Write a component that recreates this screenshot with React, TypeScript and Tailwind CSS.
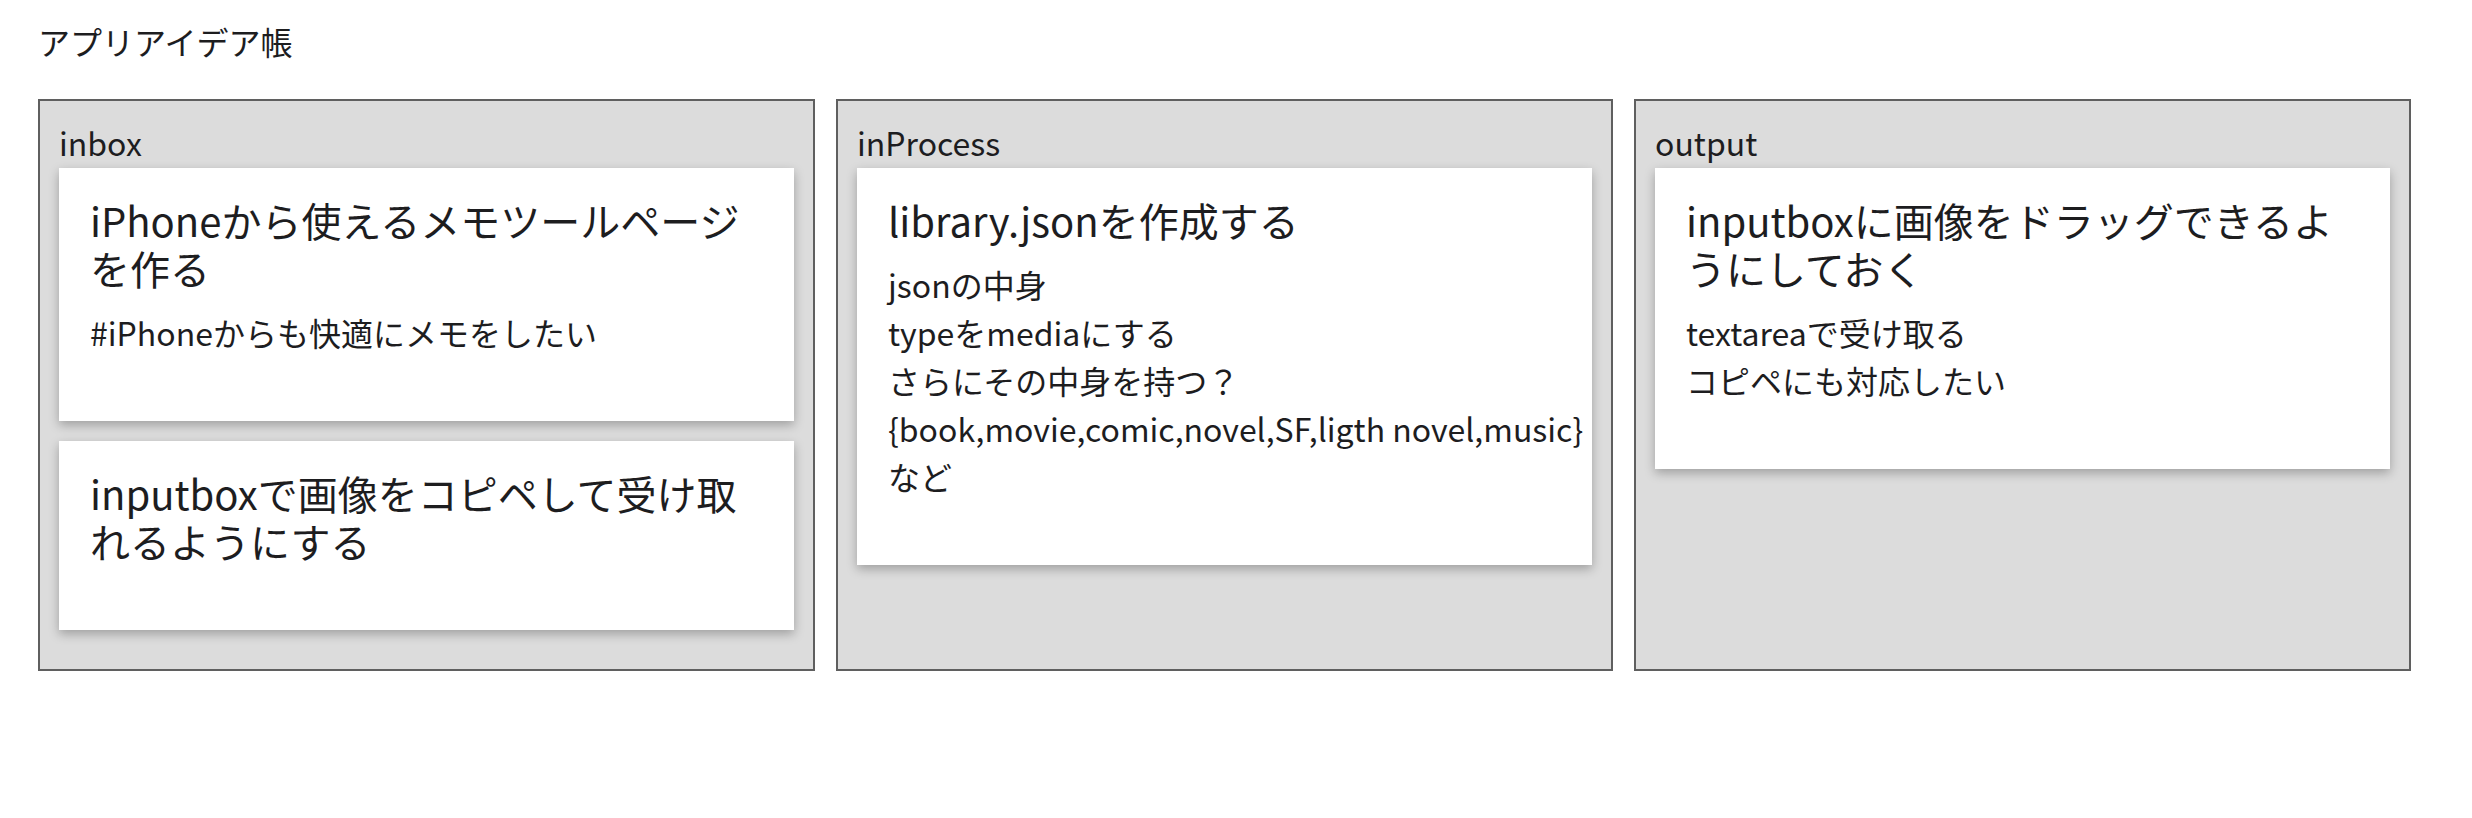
import React from 'react';

interface Card {
  title: string;
  body: string[];
}

interface Column {
  name: string;
  cards: Card[];
}

const columns: Column[] = [
  {
    name: 'inbox',
    cards: [
      { title: 'iPhoneから使えるメモツールページを作る', body: ['#iPhoneからも快適にメモをしたい'] },
      { title: 'inputboxで画像をコピペして受け取れるようにする', body: [] },
    ],
  },
  {
    name: 'inProcess',
    cards: [
      {
        title: 'library.jsonを作成する',
        body: ['jsonの中身', 'typeをmediaにする', 'さらにその中身を持つ？', '{book,movie,comic,novel,SF,ligth novel,music}', 'など'],
      },
    ],
  },
  {
    name: 'output',
    cards: [
      { title: 'inputboxに画像をドラッグできるようにしておく', body: ['textareaで受け取る', 'コピペにも対応したい'] },
    ],
  },
];

const IdeaCard: React.FC<{ card: Card }> = ({ card }) => (
  <div className="mb-[20px] bg-white px-[31px] pt-[28px] pb-[65px] shadow-[0_4px_10px_rgba(0,0,0,0.28)]">
    <h2 className="text-[40px] leading-[48px] font-normal text-[#1d1d1f]">{card.title}</h2>
    {card.body.length > 0 && (
      <div className="mt-[16px] text-[32px] leading-[48px] text-[#1d1d1f]">
        {card.body.map((line, i) => (
          <div key={i} className="whitespace-nowrap">{line}</div>
        ))}
      </div>
    )}
  </div>
);

export default function App() {
  return (
    <div
      className="min-h-screen bg-white pt-[17px] pl-[38px] text-[#1d1d1f]"
      style={{ fontFamily: '"Noto Sans CJK JP", "Noto Sans", sans-serif' }}
    >
      <h1 className="mb-[34px] text-[32px] leading-[48px] font-normal">アプリアイデア帳</h1>

      <div className="flex items-stretch gap-[21px]">
        {columns.map(col => (
          <div key={col.name} className="w-[777px] border-2 border-[#5f5f5f] bg-[#dcdcdc] px-[19px] pt-[17px] pb-[19px]">
            <div className="mb-[2px] text-[32px] leading-[48px]">{col.name}</div>
            {col.cards.map((card, i) => (
              <IdeaCard key={i} card={card} />
            ))}
          </div>
        ))}
      </div>
    </div>
  );
}
